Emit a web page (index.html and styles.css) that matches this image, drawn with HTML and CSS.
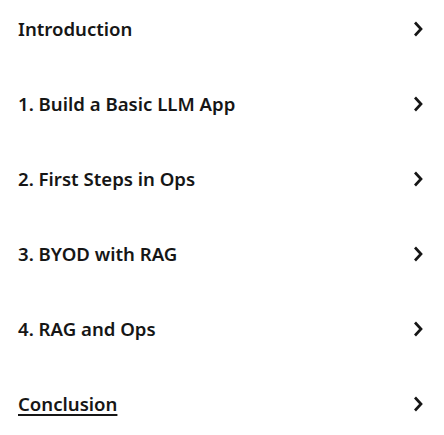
FILE: index.html
```html
<!DOCTYPE html>
<html>
<head>
<meta charset="utf-8">
<link rel="stylesheet" href="styles.css">
</head>
<body>
<nav class="toc">
  <a class="row" href="#"><span class="label">Introduction</span><svg class="chev" viewBox="0 0 10 16"><path d="M2 1.5 L8 8 L2 14.5" /></svg></a>
  <a class="row" href="#"><span class="label">1. Build a Basic LLM App</span><svg class="chev" viewBox="0 0 10 16"><path d="M2 1.5 L8 8 L2 14.5" /></svg></a>
  <a class="row" href="#"><span class="label">2. First Steps in Ops</span><svg class="chev" viewBox="0 0 10 16"><path d="M2 1.5 L8 8 L2 14.5" /></svg></a>
  <a class="row" href="#"><span class="label">3. BYOD with RAG</span><svg class="chev" viewBox="0 0 10 16"><path d="M2 1.5 L8 8 L2 14.5" /></svg></a>
  <a class="row" href="#"><span class="label">4. RAG and Ops</span><svg class="chev" viewBox="0 0 10 16"><path d="M2 1.5 L8 8 L2 14.5" /></svg></a>
  <a class="row" href="#"><span class="label underline">Conclusion</span><svg class="chev" viewBox="0 0 10 16"><path d="M2 1.5 L8 8 L2 14.5" /></svg></a>
</nav>
</body>
</html>
```
FILE: styles.css
```css
html, body { margin: 0; padding: 0; background: #fff; }
.toc {
  display: flex;
  flex-direction: column;
  gap: 47px;
  padding: 14px 21px 0 18px;
}
.row {
  display: flex;
  align-items: center;
  justify-content: space-between;
  height: 28px;
  text-decoration: none;
  color: #161616;
  font-family: "Noto Sans", sans-serif;
  font-weight: 600;
  font-size: 18.6px;
}
.label.underline {
  text-decoration: underline;
  text-decoration-thickness: 2px;
  text-underline-offset: 3px;
}
.chev {
  width: 10px;
  height: 16px;
  margin-top: 2px;
  fill: none;
  stroke: #161616;
  stroke-width: 2.7;
  stroke-linejoin: miter;
}
```
